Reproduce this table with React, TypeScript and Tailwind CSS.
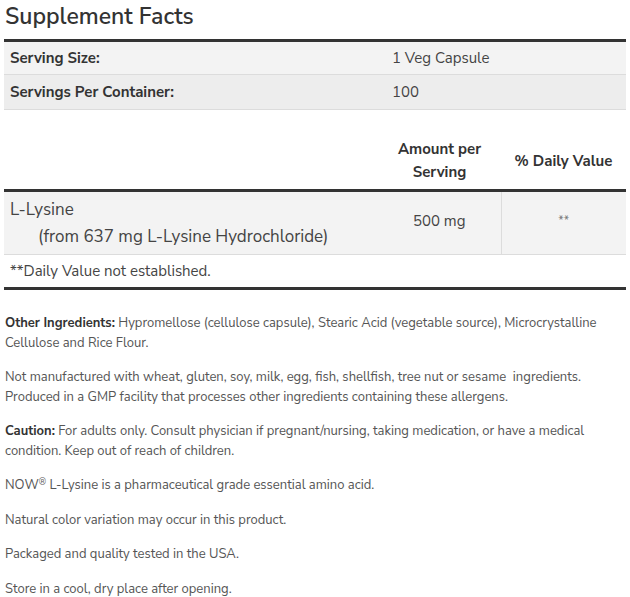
export default function App() {
  return (
    <div className="min-h-[597px] w-[630px] bg-white px-1 font-['Nunito_Sans','Lato',sans-serif] text-[#333]">
      <h2 className="pl-[1px] pt-[2px] text-[23px] font-semibold leading-[30px] text-[#333]">
        Supplement Facts
      </h2>

      {/* Serving info */}
      <table className="mt-[7px] w-[622px] border-collapse border-t-[3px] border-[#333] text-[15px]">
        <tbody>
          <tr className="h-[34px] border-b border-[#dcdcdc] bg-[#f3f3f3]">
            <td className="w-[382px] px-[6px] font-bold text-[#333]">Serving Size:</td>
            <td className="px-[6px] text-[#444]">1 Veg Capsule</td>
          </tr>
          <tr className="h-[35px] border-b border-[#dcdcdc] bg-[#ededed]">
            <td className="px-[6px] font-bold text-[#333]">Servings Per Container:</td>
            <td className="px-[6px] text-[#444]">100</td>
          </tr>
        </tbody>
      </table>

      {/* Nutrients */}
      <table className="mt-[19px] w-[622px] border-collapse text-[15px]">
        <thead>
          <tr className="border-b-[3px] border-[#333]">
            <th className="w-[374px]" />
            <th className="w-[123px] px-1 pb-[5px] pt-[9px] text-center font-bold leading-[23px] text-[#333]">
              <span className="block">Amount per</span>
              <span className="block">Serving</span>
            </th>
            <th className="px-1 pt-[4px] text-center font-bold leading-[23px] text-[#333]">% Daily Value</th>
          </tr>
        </thead>
        <tbody>
          <tr className="border-b border-[#dcdcdc] bg-[#f3f3f3]">
            <td className="px-[6px] pb-[4px] pt-[4px] text-[17px] leading-[27px] text-[#444]">
              <div>L-Lysine</div>
              <div className="pl-[28px]">(from 637 mg L-Lysine Hydrochloride)</div>
            </td>
            <td className="pb-[4px] text-center text-[#444]">500 mg</td>
            <td className="border-l border-[#dcdcdc] pb-[6px] text-center text-[12px] text-[#777]">**</td>
          </tr>
          <tr className="h-[34px] border-b-[3px] border-[#333]">
            <td colSpan={3} className="px-[6px] text-[15px] text-[#444]">
              **Daily Value not established.
            </td>
          </tr>
        </tbody>
      </table>

      {/* Notes */}
      <div className="mt-[24px] pl-[1px] text-[13px] leading-[19.5px] text-[#555]">
        <p className="mb-[15px]">
          <strong className="font-bold text-[#333]">Other Ingredients:</strong> Hypromellose (cellulose capsule), Stearic Acid
          (vegetable source), Microcrystalline Cellulose and Rice Flour.
        </p>
        <p className="mb-[15px]">
          Not manufactured with wheat, gluten, soy, milk, egg, fish, shellfish, tree nut or sesame&nbsp; ingredients.
          <br />
          Produced in a GMP facility that processes other ingredients containing these allergens.
        </p>
        <p className="mb-[15px]">
          <strong className="font-bold text-[#333]">Caution:</strong> For adults only. Consult physician if pregnant/nursing,
          taking medication, or have a medical condition. Keep out of reach of children.
        </p>
        <p className="mb-[15px]">
          NOW<sup className="text-[9px] leading-none">®</sup> L-Lysine is a pharmaceutical grade essential amino acid.
        </p>
        <p className="mb-[15px]">Natural color variation may occur in this product.</p>
        <p className="mb-[15px]">Packaged and quality tested in the USA.</p>
        <p>Store in a cool, dry place after opening.</p>
      </div>
    </div>
  );
}
